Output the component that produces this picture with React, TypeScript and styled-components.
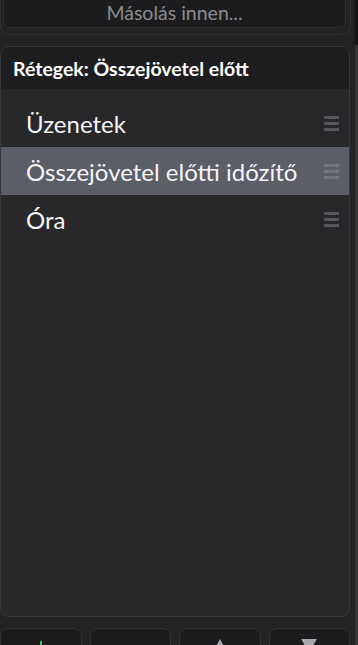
import React from "react";
import styled, { createGlobalStyle } from "styled-components";

const GlobalStyle = createGlobalStyle`
  html, body {
    margin: 0;
    padding: 0;
    background: #232325;
    overflow: hidden;
  }
  body {
    font-family: Lato, "Open Sans", "Liberation Sans", sans-serif;
    -webkit-font-smoothing: antialiased;
  }
`;

const Shell = styled.div`
  display: flex;
  align-items: flex-start;
  width: 358px;
  height: 645px;
  overflow: hidden;
`;

const Page = styled.div`
  width: 350px;
  flex: none;
  margin-top: -8px;
  display: flex;
  flex-direction: column;
  & > * {
    flex: none;
  }
`;

const Gutter = styled.div`
  flex: 1;
  align-self: stretch;
  display: flex;
  flex-direction: column;
  padding-left: 5px;
`;

const GutterTop = styled.div`
  height: 45px;
  background: #131314;
`;

const GutterRest = styled.div`
  flex: 1;
  background: #353538;
`;

const CopyBox = styled.div`
  border: 1px solid #313134;
  border-top: none;
  border-radius: 0 0 9px 9px;
  padding: 3px 4px 6px 2px;
  margin-right: -1px;
`;

const CopyButton = styled.div`
  height: 33px;
  box-sizing: border-box;
  background: #1c1c1e;
  border: 1px solid #2e2e31;
  border-radius: 0 0 7px 7px;
  display: flex;
  align-items: flex-end;
  justify-content: center;
  padding-bottom: 2px;
  color: #8b8b90;
  font-size: 19.5px;
  line-height: 24px;
`;

const LayersPanel = styled.div`
  margin-top: 11px;
  height: 571px;
  box-sizing: border-box;
  border: 1px solid #38383b;
  border-radius: 9px;
  background: #28282a;
  overflow: hidden;
  display: flex;
  flex-direction: column;
`;

const PanelHeader = styled.div`
  height: 42px;
  flex: none;
  background: #1e1e20;
  display: flex;
  align-items: center;
  padding-left: 12px;
  color: #ffffff;
  font-size: 19.5px;
  font-weight: 700;
`;

const LayerList = styled.div`
  padding-top: 10px;
  display: flex;
  flex-direction: column;
`;

const LayerRow = styled.div<{ $selected?: boolean }>`
  height: 48px;
  flex: none;
  display: flex;
  align-items: center;
  justify-content: space-between;
  padding: 0 10px 0 25px;
  background: ${(p) => (p.$selected ? "#5b5d67" : "transparent")};
  color: #f4f4f6;
  font-size: 24px;
`;

const Handle = styled.div<{ $selected?: boolean }>`
  width: 15px;
  display: flex;
  flex-direction: column;
  gap: 3px;
  span {
    display: block;
    height: 3px;
    background: ${(p) => (p.$selected ? "#73757e" : "#58585c")};
  }
`;

const ButtonBar = styled.div`
  margin-top: 11px;
  display: grid;
  grid-template-columns: repeat(4, 1fr);
  gap: 8px;
`;

const ToolButton = styled.div`
  height: 40px;
  box-sizing: border-box;
  background: #1c1c1e;
  border: 1px solid #323235;
  border-radius: 8px;
  display: flex;
  justify-content: center;
  padding-top: 9px;
`;

const layers = [
  { name: "Üzenetek", selected: false },
  { name: "Összejövetel előtti időzítő", selected: true },
  { name: "Óra", selected: false },
];

const PlusIcon = () => (
  <svg width="18" height="18" viewBox="0 0 18 18">
    <rect x="8" y="3" width="2" height="14" fill="#30c85a" />
    <rect x="2" y="9" width="14" height="2" fill="#30c85a" />
  </svg>
);

const MinusIcon = () => (
  <svg width="18" height="18" viewBox="0 0 18 18">
    <rect x="2" y="10" width="14" height="2" fill="#e5484d" />
  </svg>
);

const UpIcon = () => (
  <svg width="18" height="18" viewBox="0 0 18 18">
    <polygon points="9,1 1.5,15 16.5,15" fill="#a9a9ae" />
  </svg>
);

const DownIcon = () => (
  <svg width="18" height="18" viewBox="0 0 18 18">
    <polygon points="1.2,1 16.8,1 9,15" fill="#a9a9ae" />
  </svg>
);

export default function App() {
  return (
    <>
      <GlobalStyle />
      <Shell>
        <Page>
          <CopyBox>
            <CopyButton>Másolás innen...</CopyButton>
          </CopyBox>
          <LayersPanel>
            <PanelHeader>Rétegek: Összejövetel előtt</PanelHeader>
            <LayerList>
              {layers.map((l) => (
                <LayerRow key={l.name} $selected={l.selected}>
                  <span>{l.name}</span>
                  <Handle $selected={l.selected}>
                    <span />
                    <span />
                    <span />
                  </Handle>
                </LayerRow>
              ))}
            </LayerList>
          </LayersPanel>
          <ButtonBar>
            <ToolButton>
              <PlusIcon />
            </ToolButton>
            <ToolButton>
              <MinusIcon />
            </ToolButton>
            <ToolButton>
              <UpIcon />
            </ToolButton>
            <ToolButton>
              <DownIcon />
            </ToolButton>
          </ButtonBar>
        </Page>
        <Gutter>
          <GutterTop />
          <GutterRest />
        </Gutter>
      </Shell>
    </>
  );
}
